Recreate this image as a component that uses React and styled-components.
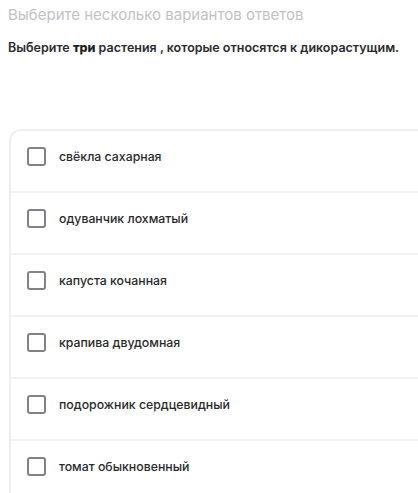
import styled, { createGlobalStyle } from 'styled-components';

const GlobalStyle = createGlobalStyle`
  body {
    margin: 0;
    background: #ffffff;
    font-family: Inter, "Noto Sans", sans-serif;
    overflow: hidden;
  }
`;

const Page = styled.div`
  padding: 5px 0 0 8px;
  overflow: hidden;
`;

const Hint = styled.p`
  margin: 0;
  font-size: 15px;
  line-height: 20px;
  color: #c2c2c6;
  font-weight: 400;
`;

const Question = styled.p`
  margin: 14px 0 0;
  font-size: 12.5px;
  line-height: 18px;
  font-weight: 600;
  color: #2b2b2e;

  b {
    font-weight: 800;
    color: #1e1e20;
  }
`;

const OptionList = styled.div`
  margin: 72px -24px 0 1px;
  border: 2px solid #efeff1;
  border-bottom: none;
  border-radius: 12px 12px 0 0;
  display: flex;
  flex-direction: column;
`;

const Option = styled.label`
  display: flex;
  align-items: flex-start;
  gap: 13px;
  padding: 16px 16px 25px;
  height: 19px;
  border-bottom: ${(p) => (p.$last ? 'none' : '2px solid #f2f2f3')};
  cursor: pointer;
`;

const Box = styled.span`
  flex: none;
  width: 15px;
  height: 15px;
  border: 2px solid #818189;
  border-radius: 3px;
`;

const OptionText = styled.span`
  font-size: 12.3px;
  line-height: 19px;
  font-weight: 500;
  color: #2a2a2d;
`;

const options = [
  'свёкла сахарная',
  'одуванчик лохматый',
  'капуста кочанная',
  'крапива двудомная',
  'подорожник сердцевидный',
  'томат обыкновенный',
];

function App() {
  return (
    <>
      <GlobalStyle />
      <Page>
        <Hint>Выберите несколько вариантов ответов</Hint>
        <Question>
          Выберите <b>три</b> растения , которые относятся к дикорастущим.
        </Question>
        <OptionList>
          {options.map((text, i) => (
            <Option key={text} $last={i === options.length - 1}>
              <Box />
              <OptionText>{text}</OptionText>
            </Option>
          ))}
        </OptionList>
      </Page>
    </>
  );
}

export default App;
